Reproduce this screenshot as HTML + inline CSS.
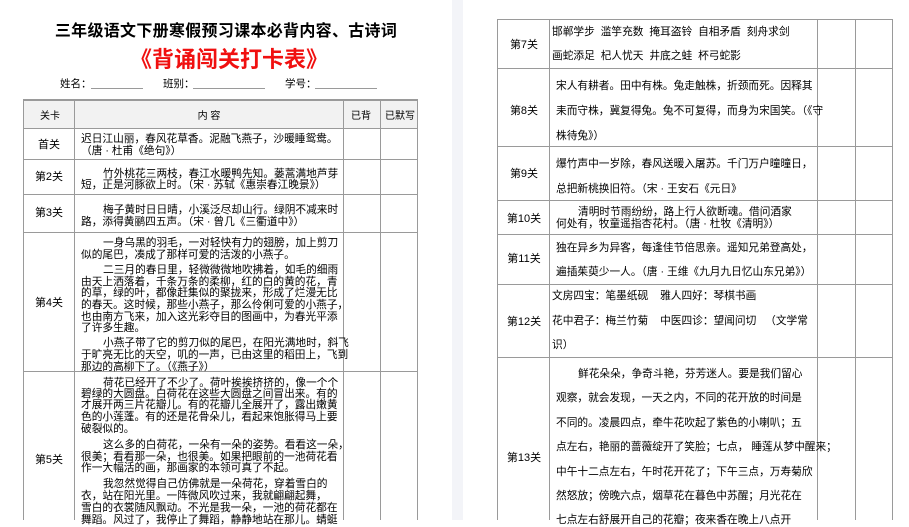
<!DOCTYPE html>
<html><head><meta charset="utf-8">
<style>
*{margin:0;padding:0;box-sizing:border-box}
body{width:909px;height:520px;overflow:hidden;background:#fff;position:relative;font-family:"Liberation Sans","Noto Sans CJK SC","WenQuanYi Zen Hei",sans-serif;color:#000}
.gap{position:absolute;left:452px;top:0;width:11px;height:520px;background:#f3f4f8}
.l{position:absolute;white-space:nowrap;font-size:10.7px;line-height:14px;height:14px}
.c{position:absolute;white-space:nowrap;font-size:11px;line-height:14px;height:14px;transform:translateX(-50%)}
.h{position:absolute;background:#9a9a9a}
</style></head><body>
<div class="gap"></div>

<div style="position:absolute;left:0;width:452px;top:22px;text-align:center;font-size:16px;font-weight:bold;line-height:20px;letter-spacing:0.3px">三年级语文下册寒假预习课本必背内容、古诗词</div>
<div style="position:absolute;left:0;width:452px;top:46px;text-align:center;font-size:22px;font-weight:bold;color:#f01010;line-height:28px;padding-left:6px">《背诵闯关打卡表》</div>
<div class="l" style="left:60px;top:77px;font-size:10.5px">姓名：</div>
<div class="h" style="left:91px;top:88px;width:52px;height:1px"></div>
<div class="l" style="left:163px;top:77px;font-size:10.5px">班别：</div>
<div class="h" style="left:193px;top:88px;width:72px;height:1px"></div>
<div class="l" style="left:285px;top:77px;font-size:10.5px">学号：</div>
<div class="h" style="left:315px;top:88px;width:62px;height:1px"></div>

<div style="position:absolute;left:23px;top:99px;width:395px;height:30px;background:#f2f2f2"></div>
<div class="h" style="left:23px;top:99px;width:395px;height:2px"></div>
<div class="h" style="left:23px;top:128px;width:395px;height:1px"></div>
<div class="h" style="left:23px;top:159px;width:395px;height:1px"></div>
<div class="h" style="left:23px;top:194px;width:395px;height:1px"></div>
<div class="h" style="left:23px;top:232px;width:395px;height:1px"></div>
<div class="h" style="left:23px;top:371px;width:395px;height:1px"></div>
<div class="h" style="left:23px;top:99px;width:1px;height:421px"></div>
<div class="h" style="left:74px;top:99px;width:1px;height:421px"></div>
<div class="h" style="left:343px;top:99px;width:1px;height:421px"></div>
<div class="h" style="left:380px;top:99px;width:1px;height:421px"></div>
<div class="h" style="left:417px;top:99px;width:1px;height:421px"></div>

<div class="c" style="left:50px;top:110px;font-size:10px">关卡</div>
<div class="c" style="left:209px;top:110px;font-size:10px">内 容</div>
<div class="c" style="left:361px;top:110px;font-size:10px">已背</div>
<div class="c" style="left:400px;top:110px;font-size:10px">已默写</div>

<div class="c" style="left:49px;top:138px">首关</div>
<div class="l" style="left:81px;top:132px">迟日江山丽，春风花草香。泥融飞燕子，沙暖睡鸳鸯。</div>
<div class="l" style="left:81px;top:144px">（唐 · 杜甫《绝句》）</div>

<div class="c" style="left:49px;top:170px">第2关</div>
<div class="l" style="left:103px;top:167px">竹外桃花三两枝，春江水暖鸭先知。蒌蒿满地芦芽</div>
<div class="l" style="left:81px;top:178px">短，正是河豚欲上时。（宋 · 苏轼《惠崇春江晚景》）</div>

<div class="c" style="left:49px;top:206px">第3关</div>
<div class="l" style="left:103px;top:203px">梅子黄时日日晴，小溪泛尽却山行。绿阴不减来时</div>
<div class="l" style="left:81px;top:215px">路，添得黄鹂四五声。（宋 · 曾几《三衢道中》）</div>

<div class="c" style="left:49px;top:296px">第4关</div>
<div class="l" style="left:103px;top:236px">一身乌黑的羽毛，一对轻快有力的翅膀，加上剪刀</div>
<div class="l" style="left:81px;top:248px">似的尾巴，凑成了那样可爱的活泼的小燕子。</div>
<div class="l" style="left:103px;top:263px">二三月的春日里，轻微微微地吹拂着，如毛的细雨</div>
<div class="l" style="left:81px;top:275px">由天上洒落着，千条万条的柔柳，红的白的黄的花，青</div>
<div class="l" style="left:81px;top:286px">的草，绿的叶，都像赶集似的聚拢来，形成了烂漫无比</div>
<div class="l" style="left:81px;top:298px">的春天。这时候，那些小燕子，那么伶俐可爱的小燕子，</div>
<div class="l" style="left:81px;top:310px">也由南方飞来，加入这光彩夺目的图画中，为春光平添</div>
<div class="l" style="left:81px;top:321px">了许多生趣。</div>
<div class="l" style="left:103px;top:336px">小燕子带了它的剪刀似的尾巴，在阳光满地时，斜飞</div>
<div class="l" style="left:81px;top:348px">于旷亮无比的天空，叽的一声，已由这里的稻田上，飞到</div>
<div class="l" style="left:81px;top:360px">那边的高柳下了。（《燕子》）</div>

<div class="c" style="left:49px;top:453px">第5关</div>
<div class="l" style="left:103px;top:376px">荷花已经开了不少了。荷叶挨挨挤挤的，像一个个</div>
<div class="l" style="left:81px;top:387px">碧绿的大圆盘。白荷花在这些大圆盘之间冒出来。有的</div>
<div class="l" style="left:81px;top:398px">才展开两三片花瓣儿。有的花瓣儿全展开了，露出嫩黄</div>
<div class="l" style="left:81px;top:410px">色的小莲蓬。有的还是花骨朵儿，看起来饱胀得马上要</div>
<div class="l" style="left:81px;top:422px">破裂似的。</div>
<div class="l" style="left:103px;top:438px">这么多的白荷花，一朵有一朵的姿势。看看这一朵，</div>
<div class="l" style="left:81px;top:450px">很美；看看那一朵，也很美。如果把眼前的一池荷花看</div>
<div class="l" style="left:81px;top:461px">作一大幅活的画，那画家的本领可真了不起。</div>
<div class="l" style="left:103px;top:477px">我忽然觉得自己仿佛就是一朵荷花，穿着雪白的</div>
<div class="l" style="left:81px;top:489px">衣，站在阳光里。一阵微风吹过来，我就翩翩起舞，</div>
<div class="l" style="left:81px;top:501px">雪白的衣裳随风飘动。不光是我一朵，一池的荷花都在</div>
<div class="l" style="left:81px;top:513px">舞蹈。风过了，我停止了舞蹈，静静地站在那儿。蜻蜓</div>

<div class="h" style="left:497px;top:19px;width:396px;height:1px"></div>
<div class="h" style="left:497px;top:68px;width:396px;height:1px"></div>
<div class="h" style="left:497px;top:146px;width:396px;height:1px"></div>
<div class="h" style="left:497px;top:200px;width:396px;height:1px"></div>
<div class="h" style="left:497px;top:234px;width:396px;height:1px"></div>
<div class="h" style="left:497px;top:284px;width:396px;height:1px"></div>
<div class="h" style="left:497px;top:357px;width:396px;height:1px"></div>
<div class="h" style="left:497px;top:19px;width:1px;height:501px"></div>
<div class="h" style="left:549px;top:19px;width:1px;height:501px"></div>
<div class="h" style="left:817px;top:19px;width:1px;height:501px"></div>
<div class="h" style="left:855px;top:19px;width:1px;height:501px"></div>
<div class="h" style="left:892px;top:19px;width:1px;height:501px"></div>

<div class="c" style="left:524px;top:38px">第7关</div>
<div class="l" style="left:552px;top:25px">邯郸学步&nbsp;&nbsp;滥竽充数&nbsp;&nbsp;掩耳盗铃&nbsp;&nbsp;自相矛盾&nbsp;&nbsp;刻舟求剑</div>
<div class="l" style="left:552px;top:49px">画蛇添足&nbsp;&nbsp;杞人忧天&nbsp;&nbsp;井底之蛙&nbsp;&nbsp;杯弓蛇影</div>

<div class="c" style="left:524px;top:104px">第8关</div>
<div class="l" style="left:556px;top:79px">宋人有耕者。田中有株。兔走触株，折颈而死。因释其</div>
<div class="l" style="left:556px;top:104px">耒而守株，冀复得兔。兔不可复得，而身为宋国笑。（《守</div>
<div class="l" style="left:556px;top:129px">株待兔》）</div>

<div class="c" style="left:524px;top:167px">第9关</div>
<div class="l" style="left:556px;top:157px">爆竹声中一岁除，春风送暖入屠苏。千门万户曈曈日，</div>
<div class="l" style="left:556px;top:182px">总把新桃换旧符。（宋 · 王安石《元日》</div>

<div class="c" style="left:524px;top:212px">第10关</div>
<div class="l" style="left:578px;top:205px">清明时节雨纷纷，路上行人欲断魂。借问酒家</div>
<div class="l" style="left:556px;top:217px">何处有，牧童遥指杏花村。（唐 · 杜牧《清明》）</div>

<div class="c" style="left:524px;top:252px">第11关</div>
<div class="l" style="left:556px;top:241px">独在异乡为异客，每逢佳节倍思亲。遥知兄弟登高处，</div>
<div class="l" style="left:556px;top:265px">遍插茱萸少一人。（唐 · 王维《九月九日忆山东兄弟》）</div>

<div class="c" style="left:524px;top:315px">第12关</div>
<div class="l" style="left:552px;top:289px">文房四宝：笔墨纸砚&nbsp;&nbsp;&nbsp;&nbsp;雅人四好：琴棋书画</div>
<div class="l" style="left:552px;top:314px">花中君子：梅兰竹菊&nbsp;&nbsp;&nbsp;&nbsp;中医四诊：望闻问切&nbsp;&nbsp;&nbsp;（文学常</div>
<div class="l" style="left:552px;top:338px">识）</div>

<div class="c" style="left:524px;top:451px">第13关</div>
<div class="l" style="left:578px;top:367px">鲜花朵朵，争奇斗艳，芬芳迷人。要是我们留心</div>
<div class="l" style="left:556px;top:391px">观察，就会发现，一天之内，不同的花开放的时间是</div>
<div class="l" style="left:556px;top:416px">不同的。凌晨四点，牵牛花吹起了紫色的小喇叭；五</div>
<div class="l" style="left:556px;top:440px">点左右，艳丽的蔷薇绽开了笑脸；七点，&nbsp;睡莲从梦中醒来；</div>
<div class="l" style="left:556px;top:465px">中午十二点左右，午时花开花了；下午三点，万寿菊欣</div>
<div class="l" style="left:556px;top:489px">然怒放；傍晚六点，烟草花在暮色中苏醒；月光花在</div>
<div class="l" style="left:556px;top:513px">七点左右舒展开自己的花瓣；夜来香在晚上八点开</div>
</body></html>
